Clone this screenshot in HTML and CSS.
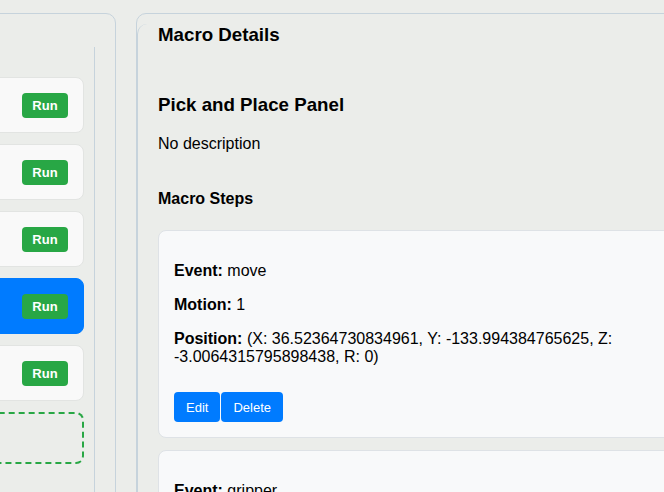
FILE: index.html
```html
<!DOCTYPE html>
<html lang="en">
<head>
<meta charset="utf-8">
<title>Macros</title>
<link rel="stylesheet" href="styles.css">
</head>
<body>
<div class="app">
  <aside class="macro-panel">
    <div class="macro-list">
      <div class="macro-card"><span class="macro-name">Home Axes</span><button class="run-btn">Run</button></div>
      <div class="macro-card"><span class="macro-name">Calibrate</span><button class="run-btn">Run</button></div>
      <div class="macro-card"><span class="macro-name">Sort Parts</span><button class="run-btn">Run</button></div>
      <div class="macro-card active"><span class="macro-name">Pick and Place Panel</span><button class="run-btn">Run</button></div>
      <div class="macro-card"><span class="macro-name">Stack Blocks</span><button class="run-btn">Run</button></div>
      <div class="new-macro">+ New Macro</div>
    </div>
  </aside>
  <section class="details-panel">
    <div class="details-body">
      <h3 class="details-title">Macro Details</h3>
      <h3 class="macro-title">Pick and Place Panel</h3>
      <p class="macro-desc">No description</p>
      <h4 class="steps-title">Macro Steps</h4>
      <div class="step-card">
        <p><strong>Event:</strong> move</p>
        <p><strong>Motion:</strong> 1</p>
        <p><strong>Position:</strong> (X: 36.52364730834961, Y: -133.994384765625, Z: -3.0064315795898438, R: 0)</p>
        <div class="step-actions">
          <button class="step-btn">Edit</button>
          <button class="step-btn">Delete</button>
        </div>
      </div>
      <div class="step-card">
        <p><strong>Event:</strong> gripper</p>
        <p><strong>State:</strong> close</p>
      </div>
    </div>
  </section>
</div>
</body>
</html>
```
FILE: styles.css
```css
* { box-sizing: border-box; }
html, body {
  margin: 0;
  padding: 0;
  width: 664px;
  height: 492px;
  overflow: hidden;
  background: #ebedea;
  font-family: "Liberation Sans", Arial, sans-serif;
  color: #000;
}
.app {
  display: flex;
  gap: 20px;
  padding-top: 13px;
  margin-left: -220px;
  width: 1200px;
  align-items: flex-start;
}
.macro-panel {
  flex: 0 0 336px;
  width: 336px;
  height: 620px;
  border: 1px solid #c6d3dc;
  border-radius: 10px;
  padding: 33px 20px 0 20px;
}
.macro-list {
  border-right: 1px solid #c6d3dc;
  padding: 30px 10px 0 0;
  height: 560px;
}
.macro-card {
  height: 56px;
  margin-bottom: 11px;
  display: flex;
  align-items: center;
  justify-content: space-between;
  padding: 0 15px;
  background: #f9f9f9;
  border: 1px solid #e2e4e2;
  border-radius: 8px;
  font-size: 16px;
}
.macro-card.active {
  background: #007bff;
  border-color: #007bff;
  color: #fff;
}
.run-btn {
  width: 46px;
  height: 25px;
  border: 0;
  border-radius: 4px;
  background: #28a745;
  color: #fff;
  font-family: "Liberation Sans", Arial, sans-serif;
  font-weight: bold;
  font-size: 13px;
  padding: 0;
  margin-top: 1px;
}
.new-macro {
  height: 52px;
  border: 2px dashed #28a745;
  border-radius: 8px;
  display: flex;
  align-items: center;
  padding-left: 20px;
  color: #28a745;
  font-weight: bold;
}
.details-panel {
  flex: 0 0 620px;
  width: 620px;
  height: 620px;
  border: 1px solid #c6d3dc;
  border-radius: 10px;
  padding-top: 19px;
}
.details-body {
  border-left: 1px solid #c6d3dc;
  border-top-left-radius: 10px;
  padding: 0 20px;
  height: 580px;
}
.details-title {
  font-size: 18.72px;
  line-height: 22px;
  font-weight: bold;
  margin: -9px 0 0 0;
}
.macro-title {
  font-size: 18.72px;
  line-height: 22px;
  font-weight: bold;
  margin: 48px 0 0 0;
}
.macro-desc {
  font-size: 16px;
  line-height: 18px;
  margin: 19px 0 0 0;
}
.steps-title {
  font-size: 16px;
  line-height: 18px;
  font-weight: bold;
  margin: 37px 0 0 0;
}
.step-card {
  margin-top: 22px;
  background: #f8f9fa;
  border: 1px solid #dee2e6;
  border-radius: 8px;
  padding: 15px 15px 15px;
}
.step-card + .step-card {
  margin-top: 12px;
}
.step-card p {
  margin: 16px 0;
  font-size: 16px;
  line-height: 18px;
}
.step-actions {
  display: flex;
  gap: 1px;
  margin-top: 26px;
}
.step-btn {
  height: 30px;
  padding: 0 12px;
  border: 0;
  border-radius: 4px;
  background: #007bff;
  color: #fff;
  font-family: "Liberation Sans", Arial, sans-serif;
  font-size: 13px;
}
```
